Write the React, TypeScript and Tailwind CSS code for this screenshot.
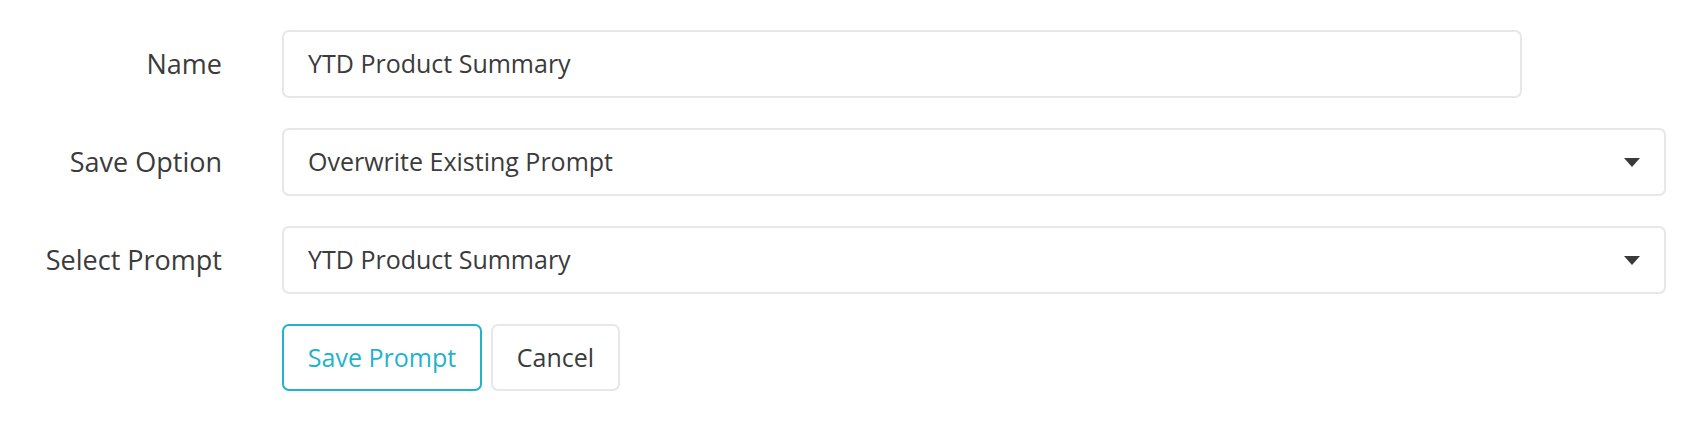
import React from 'react';

const Caret = () => (
  <svg width="16" height="9" viewBox="0 0 16 9" className="shrink-0">
    <path d="M0 0 H16 L8 9 Z" fill="#3a3a3a" />
  </svg>
);

const Row = ({ label, children }: { label: string; children: React.ReactNode }) => (
  <div className="flex items-center">
    <label className="w-[222px] text-right text-[27px] shrink-0">{label}</label>
    <div className="ml-[60px] flex-1 flex">{children}</div>
  </div>
);

const App = () => {
  return (
    <div
      className="w-[1700px] h-[434px] bg-white text-[#3b3b3b] text-[25px]"
      style={{ fontFamily: '"Open Sans", "Noto Sans", sans-serif' }}
    >
      <form className="pt-[30px] pr-[34px] flex flex-col gap-[30px]">
        <Row label="Name">
          <div className="w-[1240px] h-[68px] border-2 border-[#e6e7e9] rounded-[7px] px-[24px] flex items-center">
            YTD Product Summary
          </div>
        </Row>

        <Row label="Save Option">
          <div className="flex-1 h-[68px] border-2 border-[#e6e7e9] rounded-[7px] pl-[24px] pr-[24px] flex items-center justify-between">
            <span>Overwrite Existing Prompt</span>
            <Caret />
          </div>
        </Row>

        <Row label="Select Prompt">
          <div className="flex-1 h-[68px] border-2 border-[#e6e7e9] rounded-[7px] pl-[24px] pr-[24px] flex items-center justify-between">
            <span>YTD Product Summary</span>
            <Caret />
          </div>
        </Row>

        <div className="ml-[282px] flex gap-[9px]">
          <button
            type="button"
            className="w-[200px] h-[67px] border-2 border-[#1fb3cc] rounded-[7px] text-[#1fb3cc]"
          >
            Save Prompt
          </button>
          <button
            type="button"
            className="w-[129px] h-[67px] border-2 border-[#e6e7e9] rounded-[7px]"
          >
            Cancel
          </button>
        </div>
      </form>
    </div>
  );
};

export default App;
